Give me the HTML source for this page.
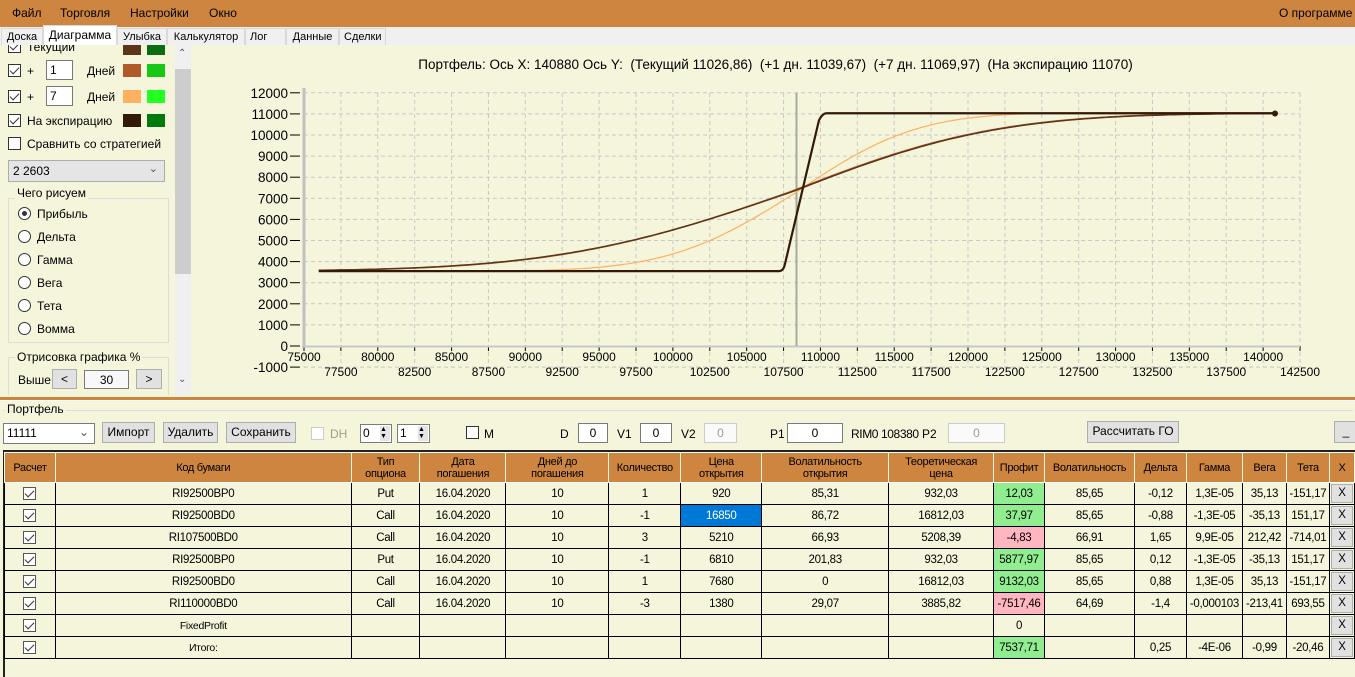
<!DOCTYPE html>
<html><head><meta charset="utf-8">
<style>
*{box-sizing:border-box;margin:0;padding:0}
body{width:1355px;height:677px;overflow:hidden;background:#f5f5dc;font-family:"Liberation Sans",sans-serif;font-size:12px;color:#000;position:relative}
.a{position:absolute}
#menu{left:0;top:0;width:1355px;height:27px;background:#cd853f;}
#menu span{position:absolute;top:6px;font-size:12px}
#tabs{left:0;top:27px;width:1355px;height:18px;background:#f0f0f0}
.tab{position:absolute;top:28px;height:17px;border:1px solid #d9d9d9;border-bottom:none;background:#f0f0f0;font-size:11px;padding:2px 4px 0 4px;text-align:center}
.cb{position:absolute;width:13px;height:13px;border:1px solid #333;background:#fff}
.cb.ck::after{content:"";position:absolute;left:3px;top:0px;width:4px;height:8px;border:solid #333;border-width:0 1.5px 1.5px 0;transform:rotate(45deg)}
.sw{position:absolute;width:18px;height:13px}
.tb{position:absolute;background:#fff;border:1px solid #7a7a7a;font-size:12px;padding:2px 3px}
.btn{position:absolute;background:#e1e1e1;border:1px solid #adadad;font-size:12px;text-align:center;padding-top:2px}
.rb{position:absolute;width:13px;height:13px;border:1px solid #333;border-radius:50%;background:#fff}
.gb{position:absolute;border:1px solid #dcdcdc}
.gbl{position:absolute;background:#f5f5dc;padding:0 2px;font-size:12px}
table{position:absolute;left:4px;top:452px;border-collapse:collapse;table-layout:fixed;font-family:"Liberation Sans Narrow","Liberation Sans",sans-serif;font-size:11.5px;letter-spacing:-0.3px}
td,th{border:1px solid #000;text-align:center;height:22px;padding:0;white-space:nowrap;overflow:hidden}
th{background:#cd853f;font-weight:normal;height:30px;line-height:12px;border-color:#fff #f5f5dc #fff #fff;font-size:11px}
td .c{display:inline-block;width:13px;height:13px;border:1px solid #555;background:#fff;position:relative;vertical-align:middle}
td .c::after{content:"";position:absolute;left:3px;top:0;width:4px;height:8px;border:solid #333;border-width:0 1.3px 1.3px 0;transform:rotate(45deg)}
td.x{padding:1px}
td.x div{background:#e1e1e1;border:1px solid #adadad;height:19px;line-height:17px}
.g{background:#90ee90}.p{background:#ffb6c1}.bl{background:#0078d7;color:#fff}
.sm{font-size:10.5px}
</style></head><body>
<div id="menu" class="a">
<span style="left:12px">Файл</span><span style="left:60px">Торговля</span><span style="left:130px">Настройки</span><span style="left:209px">Окно</span><span style="left:1279px">О программе</span>
</div>
<div id="tabs" class="a"></div>
<div class="tab" style="left:1px;width:42px">Доска</div>
<div class="tab" style="left:43px;top:25px;height:20px;width:74px;background:#fff;font-size:12px">Диаграмма</div>
<div class="tab" style="left:117px;width:50px">Улыбка</div>
<div class="tab" style="left:167px;width:78px">Калькулятор</div>
<div class="tab" style="left:245px;width:41px;text-align:left">Лог</div>
<div class="tab" style="left:286px;width:53px">Данные</div>
<div class="tab" style="left:339px;width:47px">Сделки</div>

<!-- left panel -->
<div class="a" style="left:0;top:45px;width:175px;height:350px;overflow:hidden">
<div class="cb ck" style="left:8px;top:-5px"></div><span class="a" style="left:27px;top:-5px">Текущий</span>
<div class="sw" style="left:123px;top:-3px;background:#5a3518"></div><div class="sw" style="left:147px;top:-3px;background:#0a6e10"></div>
<div class="cb ck" style="left:8px;top:19px"></div><span class="a" style="left:27px;top:19px">+</span>
<div class="tb" style="left:46px;top:15px;width:27px;height:20px">1</div><span class="a" style="left:87px;top:19px">Дней</span>
<div class="sw" style="left:123px;top:19px;background:#b05a28"></div><div class="sw" style="left:147px;top:19px;background:#14c814"></div>
<div class="cb ck" style="left:8px;top:45px"></div><span class="a" style="left:27px;top:45px">+</span>
<div class="tb" style="left:46px;top:41px;width:27px;height:20px">7</div><span class="a" style="left:87px;top:45px">Дней</span>
<div class="sw" style="left:123px;top:45px;background:#fdb060"></div><div class="sw" style="left:147px;top:45px;background:#22ff22"></div>
<div class="cb ck" style="left:8px;top:69px"></div><span class="a" style="left:27px;top:69px">На экспирацию</span>
<div class="sw" style="left:123px;top:69px;background:#331a08"></div><div class="sw" style="left:147px;top:69px;background:#007a0a"></div>
<div class="cb" style="left:8px;top:92px"></div><span class="a" style="left:27px;top:92px">Сравнить со стратегией</span>
<div class="a" style="left:8px;top:115px;width:157px;height:22px;background:#e5e5e5;border:1px solid #adadad;padding:3px 4px">2 2603<span class="a" style="right:6px;top:1px;font-size:11px;color:#555">&#8964;</span></div>
<div class="gb" style="left:8px;top:153px;width:161px;height:145px"></div>
<span class="gbl" style="left:15px;top:141px">Чего рисуем</span>
<div class="rb" style="left:18px;top:162px"><div class="a" style="left:3px;top:3px;width:5px;height:5px;border-radius:50%;background:#333"></div></div><span class="a" style="left:37px;top:162px">Прибыль</span>
<div class="rb" style="left:18px;top:185px"></div><span class="a" style="left:37px;top:185px">Дельта</span>
<div class="rb" style="left:18px;top:208px"></div><span class="a" style="left:37px;top:208px">Гамма</span>
<div class="rb" style="left:18px;top:231px"></div><span class="a" style="left:37px;top:231px">Вега</span>
<div class="rb" style="left:18px;top:254px"></div><span class="a" style="left:37px;top:254px">Тета</span>
<div class="rb" style="left:18px;top:277px"></div><span class="a" style="left:37px;top:277px">Вомма</span>
<div class="gb" style="left:8px;top:312px;width:161px;height:45px"></div>
<span class="gbl" style="left:15px;top:305px">Отрисовка графика %</span>
<span class="a" style="left:18px;top:328px">Выше</span>
<div class="btn" style="left:52px;top:324px;width:25px;height:20px">&lt;</div>
<div class="tb" style="left:84px;top:325px;width:45px;height:19px;text-align:center;background:#f8f8f8">30</div>
<div class="btn" style="left:136px;top:324px;width:26px;height:20px">&gt;</div>
</div>
<!-- scrollbar -->
<div class="a" style="left:175px;top:45px;width:16px;height:350px;background:#f0f0f0"></div>
<div class="a" style="left:175px;top:69px;width:16px;height:205px;background:#cdcdcd"></div>
<span class="a" style="left:178px;top:48px;font-size:10px;color:#555">&#8963;</span>
<span class="a" style="left:178px;top:374px;font-size:10px;color:#555">&#8964;</span>

<!-- chart -->
<div class="a" style="left:190px;top:57px;width:1165px;text-align:center;font-size:13.5px;padding-left:6px">Портфель: Ось X: 140880 Ось Y:&nbsp; (Текущий 11026,86)&nbsp; (+1 дн. 11039,67)&nbsp; (+7 дн. 11069,97)&nbsp; (На экспирацию 11070)</div>
<svg class="a" style="left:0;top:0" width="1355" height="400" id="ch">
<g id="grid" stroke="#c8c8c8" stroke-dasharray="4,3" stroke-width="1"></g>
<g id="lbl" font-family="Liberation Sans" fill="#000"></g>
<line x1="304" y1="88" x2="304" y2="347" stroke="#c0c0c0" stroke-width="3"/>
<line x1="302" y1="346.5" x2="1300" y2="346.5" stroke="#c8c8c8" stroke-width="2"/>
<line x1="796.5" y1="93" x2="796.5" y2="346" stroke="#a8aca0" stroke-width="2"/>
<path id="c7" fill="none" stroke="#fdb060" stroke-width="1.2"/>
<path id="c1" fill="none" stroke="#b05a28" stroke-width="1.5"/>
<path id="c0" fill="none" stroke="#5a3518" stroke-width="1.5"/>
<path id="ce" fill="none" stroke="#331a08" stroke-width="2.2"/>
<circle cx="1275" cy="113.5" r="3" fill="#331a08"/>
</svg>
<!-- separator -->
<div class="a" style="left:0;top:397px;width:1355px;height:3px;background:#cd853f"></div>
<div class="a" style="left:0;top:400px;width:1355px;height:1px;background:#fff"></div>
<div class="gb" style="left:3px;top:410px;width:1350px;height:1px;border-width:1px 0 0 0"></div>
<span class="gbl" style="left:5px;top:402px">Портфель</span>

<!-- controls -->
<div class="tb" style="left:3px;top:423px;width:92px;height:21px">11111<span class="a" style="right:5px;top:1px;color:#555">&#8964;</span></div>
<div class="btn" style="left:102px;top:422px;width:53px;height:21px">Импорт</div>
<div class="btn" style="left:163px;top:422px;width:55px;height:21px">Удалить</div>
<div class="btn" style="left:226px;top:422px;width:70px;height:21px">Сохранить</div>
<div class="cb" style="left:311px;top:427px;border-color:#ccc"></div><span class="a" style="left:330px;top:427px;color:#a0a080">DH</span>
<div class="tb" style="left:360px;top:424px;width:32px;height:19px;padding:1px 2px">0<span class="a" style="right:1px;top:1px;width:10px;height:15px;background:#e5e5e5;font-size:7px;line-height:7px">▲<br>▼</span></div>
<div class="tb" style="left:397px;top:424px;width:33px;height:19px;padding:1px 2px">1<span class="a" style="right:1px;top:1px;width:10px;height:15px;background:#e5e5e5;font-size:7px;line-height:7px">▲<br>▼</span></div>
<div class="cb" style="left:466px;top:426px"></div><span class="a" style="left:484px;top:427px">M</span>
<span class="a" style="left:560px;top:427px">D</span><div class="tb" style="left:578px;top:423px;width:30px;height:20px;text-align:center">0</div>
<span class="a" style="left:617px;top:427px">V1</span><div class="tb" style="left:640px;top:423px;width:32px;height:20px;text-align:center">0</div>
<span class="a" style="left:681px;top:427px">V2</span><div class="tb" style="left:704px;top:423px;width:33px;height:20px;text-align:center;border-color:#ccc;color:#999;background:#fafafa">0</div>
<span class="a" style="left:770px;top:427px">P1</span><div class="tb" style="left:787px;top:423px;width:56px;height:20px;text-align:center">0</div>
<span class="a" style="left:851px;top:427px;letter-spacing:-0.4px">RIM0 108380</span><span class="a" style="left:922px;top:427px">P2</span>
<div class="tb" style="left:948px;top:423px;width:57px;height:20px;text-align:center;border-color:#ccc;color:#999;background:#fafafa">0</div>
<div class="btn" style="left:1087px;top:421px;width:92px;height:22px">Рассчитать ГО</div>
<div class="btn" style="left:1334px;top:421px;width:24px;height:22px">_</div>
<div class="a" style="left:3px;top:450px;width:1352px;height:2px;background:#222"></div>
<div class="a" style="left:3px;top:450px;width:2px;height:227px;background:#222"></div>

<table>
<colgroup><col style="width:51px"><col style="width:296px"><col style="width:69px"><col style="width:86px"><col style="width:103px"><col style="width:72px"><col style="width:81px"><col style="width:127px"><col style="width:105px"><col style="width:51px"><col style="width:90px"><col style="width:52px"><col style="width:56px"><col style="width:44px"><col style="width:43px"><col style="width:25px"></colgroup>
<tr><th>Расчет</th><th>Код бумаги</th><th>Тип<br>опциона</th><th>Дата<br>погашения</th><th>Дней до<br>погашения</th><th>Количество</th><th>Цена<br>открытия</th><th>Волатильность<br>открытия</th><th>Теоретическая<br>цена</th><th>Профит</th><th>Волатильность</th><th>Дельта</th><th>Гамма</th><th>Вега</th><th>Тета</th><th>X</th></tr>
<tr><td><span class="c"></span></td><td>RI92500BP0</td><td>Put</td><td>16.04.2020</td><td>10</td><td>1</td><td>920</td><td>85,31</td><td>932,03</td><td class="g">12,03</td><td>85,65</td><td>-0,12</td><td>1,3E-05</td><td>35,13</td><td>-151,17</td><td class="x"><div>X</div></td></tr>
<tr><td><span class="c"></span></td><td>RI92500BD0</td><td>Call</td><td>16.04.2020</td><td>10</td><td>-1</td><td class="bl">16850</td><td>86,72</td><td>16812,03</td><td class="g">37,97</td><td>85,65</td><td>-0,88</td><td>-1,3E-05</td><td>-35,13</td><td>151,17</td><td class="x"><div>X</div></td></tr>
<tr><td><span class="c"></span></td><td>RI107500BD0</td><td>Call</td><td>16.04.2020</td><td>10</td><td>3</td><td>5210</td><td>66,93</td><td>5208,39</td><td class="p">-4,83</td><td>66,91</td><td>1,65</td><td>9,9E-05</td><td>212,42</td><td>-714,01</td><td class="x"><div>X</div></td></tr>
<tr><td><span class="c"></span></td><td>RI92500BP0</td><td>Put</td><td>16.04.2020</td><td>10</td><td>-1</td><td>6810</td><td>201,83</td><td>932,03</td><td class="g">5877,97</td><td>85,65</td><td>0,12</td><td>-1,3E-05</td><td>-35,13</td><td>151,17</td><td class="x"><div>X</div></td></tr>
<tr><td><span class="c"></span></td><td>RI92500BD0</td><td>Call</td><td>16.04.2020</td><td>10</td><td>1</td><td>7680</td><td>0</td><td>16812,03</td><td class="g">9132,03</td><td>85,65</td><td>0,88</td><td>1,3E-05</td><td>35,13</td><td>-151,17</td><td class="x"><div>X</div></td></tr>
<tr><td><span class="c"></span></td><td>RI110000BD0</td><td>Call</td><td>16.04.2020</td><td>10</td><td>-3</td><td>1380</td><td>29,07</td><td>3885,82</td><td class="p">-7517,46</td><td>64,69</td><td>-1,4</td><td>-0,000103</td><td>-213,41</td><td>693,55</td><td class="x"><div>X</div></td></tr>
<tr><td><span class="c"></span></td><td class="sm">FixedProfit</td><td></td><td></td><td></td><td></td><td></td><td></td><td></td><td>0</td><td></td><td></td><td></td><td></td><td></td><td class="x"><div>X</div></td></tr>
<tr><td><span class="c"></span></td><td class="sm">Итого:</td><td></td><td></td><td></td><td></td><td></td><td></td><td></td><td class="g">7537,71</td><td></td><td>0,25</td><td>-4E-06</td><td>-0,99</td><td>-20,46</td><td class="x"><div>X</div></td></tr>
</table>

<script>
(function(){
var X0=304,K=996/67500,Y0=346,KY=0.0211;
function px(v){return X0+(v-75000)*K}function py(v){return Y0-v*KY}
var ns="http://www.w3.org/2000/svg",g=document.getElementById('grid'),l=document.getElementById('lbl');
function ln(x1,y1,x2,y2,p,s){var e=document.createElementNS(ns,'line');e.setAttribute('x1',x1);e.setAttribute('y1',y1);e.setAttribute('x2',x2);e.setAttribute('y2',y2);if(s){e.setAttribute('stroke',s);e.setAttribute('stroke-dasharray','none')}p.appendChild(e)}
function tx(x,y,t,a,fs){var e=document.createElementNS(ns,'text');e.setAttribute('x',x);e.setAttribute('y',y);e.setAttribute('text-anchor',a);e.setAttribute('font-size',fs);e.textContent=t;l.appendChild(e)}
for(var v=-1000;v<=12000;v+=1000){var y=py(v);ln(304,y,1300,y,g);ln(290,y,300,y,g,'#000');tx(288,y+5,String(v),'end',13.5)}
for(var x=75000;x<=142500;x+=2500){var xx=px(x);ln(xx,93,xx,367,g);ln(xx,346,xx,351,g,'#000');var odd=(x%5000)!=0;tx(xx,odd?376:361,String(x),'middle',12)}
function erf(z){var t=1/(1+0.3275911*Math.abs(z));var y=1-(((((1.061405429*t-1.453152027)*t)+1.421413741)*t-0.284496736)*t+0.254829592)*t*Math.exp(-z*z);return z>=0?y:-y}
function Phi(z){return 0.5*(1+erf(z/Math.SQRT2))}
function curve(id,m,sl,sr,lo,hi){var d='';for(var x=76000;x<=140880;x+=300){var s=x<m?sl:sr;var v=lo+(hi-lo)*Phi((x-m)/s);d+=(d?'L':'M')+px(x).toFixed(1)+' '+py(v).toFixed(1)}document.getElementById(id).setAttribute('d',d)}
curve('c0',108000,12500,11000,3550,11030);
curve('c1',107900,12300,11000,3550,11040);
curve('c7',108400,6800,6400,3550,11060);
var d='M'+px(76000)+' '+py(3550)+'L'+px(107200)+' '+py(3550)+'Q'+px(107500)+' '+py(3550)+' '+px(107600)+' '+py(3900)+'L'+px(109900)+' '+py(10700)+'Q'+px(110150)+' '+py(11030)+' '+px(110400)+' '+py(11030)+'L'+px(140880)+' '+py(11030);
document.getElementById('ce').setAttribute('d',d);
})();
</script>
</body></html>
